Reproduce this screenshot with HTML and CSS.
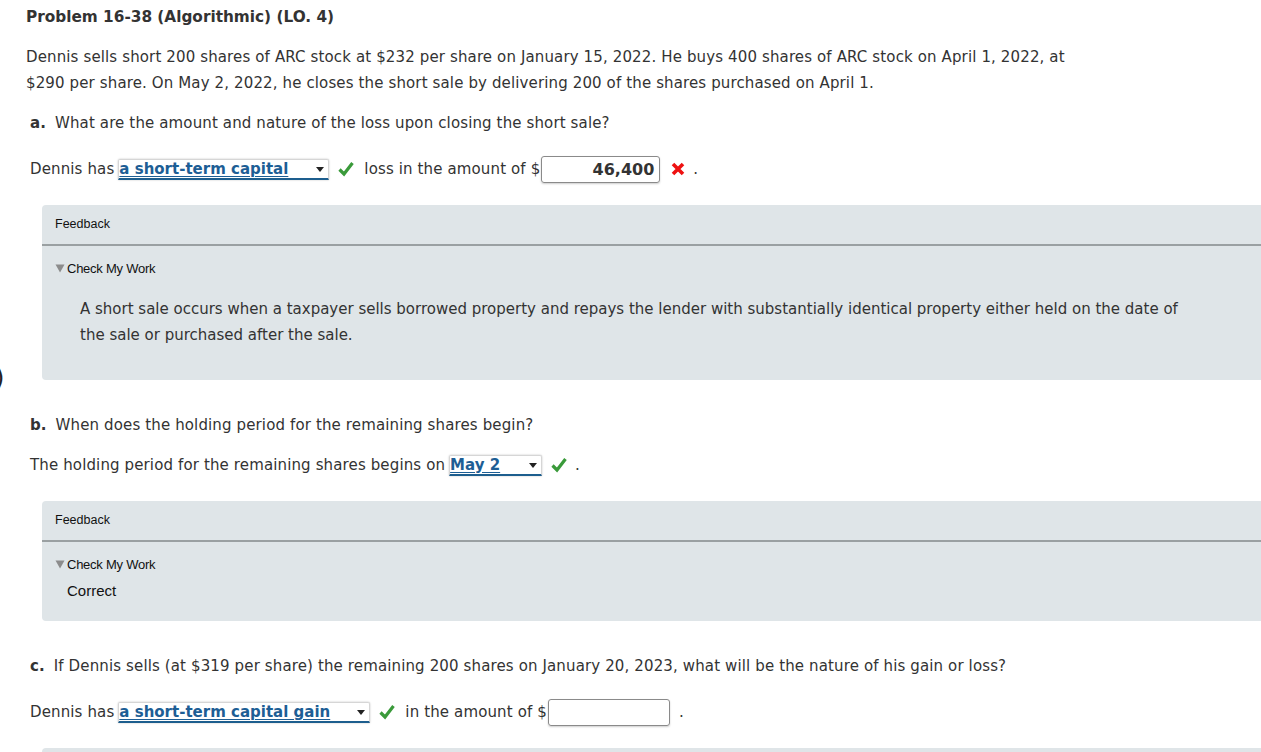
FILE: index.html
```html
<!DOCTYPE html>
<html>
<head>
<meta charset="utf-8">
<link rel="stylesheet" href="styles.css">
</head>
<body>
<span class="edge-glyph">)</span>
<div class="page">
  <h1 class="title">Problem 16-38 (Algorithmic) (LO. 4)</h1>
  <p class="intro">Dennis sells short 200 shares of ARC stock at $232 per share on January 15, 2022. He buys 400 shares of ARC stock on April 1, 2022, at $290 per share. On May 2, 2022, he closes the short sale by delivering 200 of the shares purchased on April 1.</p>

  <p class="question"><b>a.</b> What are the amount and nature of the loss upon closing the short sale?</p>
  <div class="answer-row">
    <span>Dennis has</span>
    <span class="select sel-a"><span class="sel-text">a short-term capital</span><span class="caret"></span></span>
    <svg class="check" viewBox="0 0 16 16" width="16" height="16"><path d="M1.5 8.5 L6 13 L14.5 2" fill="none" stroke="#3a9a3a" stroke-width="3.2"/></svg>
    <span>loss in the amount of $</span><span class="input filled">46,400</span>
    <svg class="cross" viewBox="0 0 14 14" width="14" height="14"><path d="M2 2 L12 12 M12 2 L2 12" fill="none" stroke="#ee1111" stroke-width="3.6"/></svg>
    <span class="dot">.</span>
  </div>

  <div class="feedback fb-a">
    <div class="fb-head">Feedback</div>
    <div class="fb-body">
      <div class="cmw"><svg class="tri" viewBox="0 0 10 9" width="10" height="9"><path d="M0.5 0.5 L9.5 0.5 L5 8.5 Z" fill="#8c8c8c"/></svg>Check My Work</div>
      <p class="explain">A short sale occurs when a taxpayer sells borrowed property and repays the lender with substantially identical property either held on the date of the sale or purchased after the sale.</p>
    </div>
  </div>

  <p class="question q-b"><b>b.</b> When does the holding period for the remaining shares begin?</p>
  <div class="answer-row row-b">
    <span>The holding period for the remaining shares begins on</span>
    <span class="select sel-b"><span class="sel-text">May 2</span><span class="caret"></span></span>
    <svg class="check" viewBox="0 0 16 16" width="16" height="16"><path d="M1.5 8.5 L6 13 L14.5 2" fill="none" stroke="#3a9a3a" stroke-width="3.2"/></svg>
    <span class="dot dot-b">.</span>
  </div>

  <div class="feedback fb-b">
    <div class="fb-head">Feedback</div>
    <div class="fb-body">
      <div class="cmw"><svg class="tri" viewBox="0 0 10 9" width="10" height="9"><path d="M0.5 0.5 L9.5 0.5 L5 8.5 Z" fill="#8c8c8c"/></svg>Check My Work</div>
      <div class="correct">Correct</div>
    </div>
  </div>

  <p class="question q-c"><b>c.</b> If Dennis sells (at $319 per share) the remaining 200 shares on January 20, 2023, what will be the nature of his gain or loss?</p>
  <div class="answer-row row-c">
    <span>Dennis has</span>
    <span class="select sel-c"><span class="sel-text">a short-term capital gain</span><span class="caret"></span></span>
    <svg class="check" viewBox="0 0 16 16" width="16" height="16"><path d="M1.5 8.5 L6 13 L14.5 2" fill="none" stroke="#3a9a3a" stroke-width="3.2"/></svg>
    <span>in the amount of $</span><span class="input empty"></span>
    <span class="dot dot-c">.</span>
  </div>

  <div class="feedback fb-c"></div>
</div>
</body>
</html>
```
FILE: styles.css
```css
html, body {
  margin: 0;
  padding: 0;
  background: #fff;
  overflow: hidden;
}
body {
  font-family: "DejaVu Sans", Verdana, sans-serif;
  font-size: 15px;
  letter-spacing: 0.13px;
  color: #333;
  width: 1261px;
  height: 752px;
  position: relative;
}
.edge-glyph {
  position: absolute;
  left: -5px;
  top: 363px;
  font-size: 24px;
  line-height: 30px;
  color: #222;
}
.page {
  padding: 7px 0 0 26px;
}
.title {
  margin: 0;
  font-size: 15.3px;
  font-weight: bold;
  letter-spacing: 0;
  color: #333;
  line-height: 20px;
}
.intro {
  margin: 17px 0 0 0;
  width: 1070px;
  line-height: 26px;
}
.question {
  margin: 17px 0 0 4px;
  line-height: 20px;
}
.question b {
  margin-right: 4px;
}
.answer-row {
  display: flex;
  align-items: center;
  margin: 22px 0 0 4px;
  height: 28px;
}
.select {
  position: relative;
  display: inline-block;
  height: 21px;
  margin-left: 4px;
  border: 1px solid #d6d6d6;
  border-bottom: 2px solid #1d5e8e;
  border-radius: 2px 2px 0 0;
  box-shadow: 0 0 2px rgba(0,0,0,0.25);
  box-sizing: border-box;
  line-height: 18px;
}
.sel-text {
  font-weight: bold;
  color: #1d5e95;
  text-decoration: underline;
  text-underline-offset: 2px;
  white-space: nowrap;
  letter-spacing: 0;
}
.caret {
  position: absolute;
  right: 4px;
  top: 7px;
  width: 0;
  height: 0;
  border-left: 4px solid transparent;
  border-right: 4px solid transparent;
  border-top: 5px solid #222;
}
.sel-a { width: 211px; }
.sel-b { width: 93px; }
.sel-c { width: 252px; }
.check {
  margin: 0 10px 0 9px;
}
.input {
  display: inline-block;
  box-sizing: border-box;
  height: 27px;
  border: 1px solid #8a8a8a;
  border-radius: 3px;
  box-shadow: 0 1px 2px rgba(0,0,0,0.2);
  text-align: right;
  line-height: 25px;
  font-weight: bold;
  font-size: 16px;
  letter-spacing: 0;
  color: #333;
  padding-right: 5px;
}
.filled { width: 119px; margin-left: 1px; }
.empty { width: 122px; margin-left: 1px; }
.cross { margin-left: 11px; }
.dot { margin-left: 8px; }
.dot-b { margin-left: -2px; }
.dot-c { margin-left: 9px; }
.feedback {
  margin-top: 22px;
  margin-left: 16px;
  background: #dfe5e8;
  border-radius: 4px 0 0 4px;
  font-family: "Liberation Sans", Arial, sans-serif;
  letter-spacing: 0;
  color: #111;
}
.fb-head {
  font-size: 12.5px;
  padding: 11px 0 0 13px;
  height: 41px;
  box-sizing: border-box;
  border-bottom: 2px solid #9aa0a2;
  line-height: 16px;
}
.fb-body {
  padding: 13px 0 32px 13px;
}
.fb-b .fb-body { padding-bottom: 20px; }
.cmw {
  font-size: 13px;
  line-height: 20px;
  letter-spacing: -0.25px;
  display: flex;
  align-items: center;
}
.tri {
  margin-right: 2px;
  margin-top: -1px;
}
.explain {
  margin: 17px 0 0 25px;
  font-family: "DejaVu Sans", Verdana, sans-serif;
  font-size: 15px;
  letter-spacing: 0;
  color: #333;
  line-height: 26px;
  width: 1110px;
}
.correct {
  font-size: 15px;
  margin: 6px 0 0 12px;
  line-height: 20px;
}
.q-b { margin-top: 35px; }
.row-b { margin-top: 16px; }
.q-c { margin-top: 35px; }
.row-c { margin-top: 22px; }
.fb-c {
  margin-top: 22px;
  height: 20px;
}
```
